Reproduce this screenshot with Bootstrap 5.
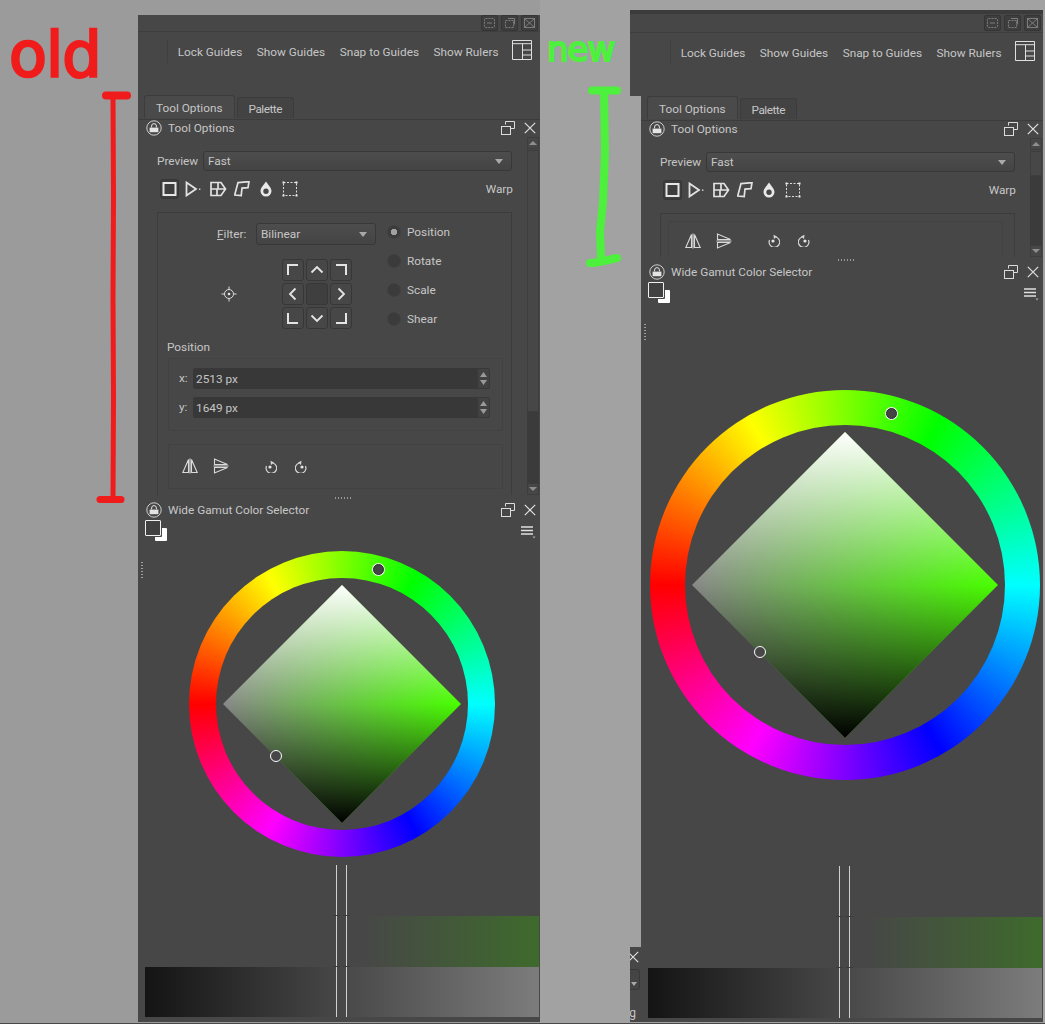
<!DOCTYPE html>
<html lang="en"><head><meta charset="utf-8"><title>Krita dockers old vs new</title>
<link href="https://cdn.jsdelivr.net/npm/bootstrap@5.3.0/dist/css/bootstrap.min.css" rel="stylesheet">
<style>
html,body{margin:0;background:#9b9b9b}
.desk{position:relative;width:1045px;height:1024px;overflow:hidden;background:linear-gradient(to right,#9b9b9b 540px,#a2a2a2 540px);font-family:Roboto,"Noto Sans",sans-serif;font-size:11.8px;line-height:1;color:#c6c6c6}
.floor{position:absolute;left:0;right:0;bottom:0;height:1px;background:#484848}
.scribble{position:absolute;font-family:"DejaVu Sans",sans-serif;line-height:1;letter-spacing:-1px}
.sc-old{left:9px;top:24px;font-size:62px;color:#f01c1c;-webkit-text-stroke:2.5px #f01c1c}
.sc-new{left:547px;top:32px;font-size:34px;color:#4df03c;-webkit-text-stroke:2px #4df03c}
.annot{position:absolute;left:0;top:0;pointer-events:none}
.pane{position:absolute;background:#474747;overflow:hidden}
.pane-old{left:138px;top:15px;width:402px;height:1007px}
.pane-new-top{left:630px;top:10px;width:413px;height:86px;border-top:4px solid #3b3b3b}
.pane-new{left:641px;top:96px;width:402px;height:926px}
.pane-frag{left:630px;top:947px;width:11px;height:75px}
.ttlbar{height:17px;border-bottom:1px solid #3e3e3e;gap:3px;padding-right:2px}
.pane-new-top .ttlbar{height:19px}
.winbtn{width:17px;height:16px;background:#3e3e3e;border:1px solid #353535;border-radius:2px}
.pane-new-top .winbtn{margin-top:1px}
.tbar{height:63px;padding:8px 8px 0 0;gap:14.500px}
.tsep{width:1px;height:23px;background:#3f3f3f;margin-right:-5px}
.tlbl{white-space:nowrap;line-height:24px}
.tlbl-last{margin-right:-1px}
.tabsrow{height:25px;padding-left:6px;border-bottom:1px solid #3c3c3c;gap:2px}
.tabx{height:21px;margin-top:2px;border:1px solid #3c3c3c;border-bottom:0;border-radius:3px 3px 0 0;padding:0 11px;line-height:22px;background:#434343;letter-spacing:-.5px}
.tabx.on{height:23px;margin-top:0;background:#4a4a4a;line-height:24px;padding:0 11px;letter-spacing:0}
.dockhead{height:16px;padding:0 4px 0 8px}
.dockhead span{margin-left:6px;padding-top:2px}
.dockbody{height:359px}
.pane-new .dockbody{height:120px}
.dockmain{flex:1;min-width:0;overflow:hidden;padding:15px 15px 0 19px}
.rowline{height:20px}
.cmb{height:20px;background:linear-gradient(#4d4d4d,#444);border:1px solid #383838;border-radius:3px;padding:2px 8px 0 4px}
.cmb::after{content:"";border:4.5px solid transparent;border-top:5px solid #a9a9a9;border-bottom:0;margin-top:-2px}
.lblprev{width:46px;flex:none;padding-top:2px}
.toolrow{margin-top:8px;height:20px;padding-left:3px;position:relative}
.toolbtn{width:19px;height:20px;background:#3d3d3d;border:1px solid #363636;border-radius:3px}
.warp{margin-left:auto;margin-right:-1px;padding-top:2px}
.grp{margin-top:13px;border:1px solid #3c3c3c;height:290px;padding:10px 9px 0 10px}
.pane-new .grp{height:60px;padding:7px 8px 0 7px;border-bottom:0}
.topblk{height:114px}
.leftcol{width:219px;flex:none}
.filt{height:22px;padding-left:49px}
.filt-lbl{padding-top:2px}
.fcmb{width:120px;margin-left:auto;height:22px;margin-right:11px}
.anch{margin-top:14px;padding-left:53px}
.gridbtns{display:grid;grid-template-columns:repeat(3,22px);grid-auto-rows:22px;gap:2px;margin-left:45px}
.gb{background:#474747;border:1px solid #373737;border-radius:3px}
.gb.mid{background:#3f3f3f}
.radios{gap:9px;margin-top:-1px}
.radrow{height:20px;gap:6px}
.radtx{padding-top:1px}
.rad{width:14px;height:14px;border-radius:50%;background:#3b3b3b;border:1px solid #414141;flex:none}
.rad.on{background:radial-gradient(circle,#a0a0a0 0 3px,#3b3b3b 3.500px)}
.poshd{margin-top:5px;margin-left:-1px;height:10px}
.innerbox{border:1px solid #424242;border-radius:2px;width:335px}
.ibox-a{margin-top:6px;height:73px;padding:9px 12px 0 10px}
.ibox-b{margin-top:13px;height:45px;padding:0 0 2px 13px;gap:15px}
.pane-new .ibox-b{margin-top:0;height:60px;padding-top:11px;padding-left:16px;align-items:flex-start!important}
.spinrow{height:21px;margin-bottom:8px}
.xlbl{width:14px;flex:none}
.spinin{flex:1;height:21px;background:#383838;border-radius:2px 0 0 2px;padding-left:3px;line-height:23px}
.spinbt{width:13px;height:21px;background:#424242;border:1px solid #383838;border-radius:0 2px 2px 0}
.scrl{width:12px;flex:none;margin-right:1px;padding-top:1px}
.scbtn{height:12px;background:#474747;border:1px solid #3d3d3d}
.scthumb{height:262px;margin-top:1px;background:#474747;border:1px solid #3d3d3d}
.pane-new .scthumb{height:25px}
.sctrack{flex:1;background:#3b3b3b}
.splitdots{height:7px;padding-left:197px}
.dots{width:17px;height:2px;margin-top:2px;background:repeating-linear-gradient(to right,#9a9a9a 0 1px,transparent 1px 3px)}
.colorsec{position:relative;height:504px}
.swat{position:absolute;left:7px;top:2px;width:22px;height:22px}
.sw-fg,.sw-bg{position:absolute;border-radius:1px}
.sw-bg{left:10px;top:8px;width:12px;height:13px;background:#fff}
.sw-fg{left:0;top:0;width:16px;height:16px;background:#414141;border:1px solid #f0f0f0;box-shadow:1px 1px 0 #474747}
.menuic{position:absolute;left:383px;top:8px}
.gutter{position:absolute;left:3px;top:44px;width:2px;height:16px;background:repeating-linear-gradient(#a0a0a0 0 1px,transparent 1px 3px)}
.wheelslot{padding:33px 0 0 6px;height:398px}
.wheel{position:relative;border-radius:50%;background:conic-gradient(from 270deg,#f00,#ff0,#0f0,#0ff,#00f,#f0f,#f00)}
.w-old{width:306px;height:306px}
.w-new{width:390px;height:390px}
.wheelhole{border-radius:50%;background:#474747}
.w-old .wheelhole{width:252px;height:252px}
.w-new .wheelhole{width:320px;height:320px}
.diam{clip-path:polygon(50% 0,100% 50%,50% 100%,0 50%);background:linear-gradient(#fff,rgba(255,255,255,0) 50%,rgba(0,0,0,0) 50%,#000),linear-gradient(to right,#888,#48ff00)}
.w-old .diam{width:238px;height:238px}
.w-new .diam{width:306px;height:306px}
.hnd{position:absolute;width:12px;height:12px;border-radius:50%;background:#474747;border:1px solid #fff}
.hnd.dark{width:11px;height:11px;border-color:#2a2a2a;background:#444;box-shadow:0 0 0 1px #eee}
.h1a{left:184px;top:12.500px}.h2a{left:81px;top:198.500px}
.h1b{left:236px;top:17.500px}.h2b{left:104px;top:255.500px}
.stripwrap{position:relative;padding:0 1px 0 7px}
.stripgreen{height:51px;margin-left:200px;background:linear-gradient(to right,#474747,#474747 8%,#3e6a2c)}
.stripgray{height:50px;background:linear-gradient(to right,#141414,#7c7c7c)}
.vln{position:absolute;width:1px;background:#d0d0d0;top:-51px;height:152px}
.vln::before,.vln::after{content:"";position:absolute;left:-3px;width:7px;height:1px;background:#3a3a3a}
.vln::before{top:50px}.vln::after{top:101px}
.vln-a{left:198px}.vln-b{left:208px}
.pane-new .wheelslot{height:637px;padding-top:110px}
.pane-new .colorsec{position:relative;height:742px}
.pane-new .stripgreen{margin-left:202px}
.fragx{position:absolute;left:-3px;top:4px}
.fragc{position:absolute;left:-20px;top:22px;width:30px;height:21px;background:#444;border:1px solid #383838;border-radius:3px}
.fragc::after{content:"";position:absolute;right:2px;bottom:3px;border:3px solid transparent;border-top:4px solid #a9a9a9;border-bottom:0}
.fragg{position:absolute;right:5px;top:60px;font-size:12px}
.ml-t2{margin-left:6px}.ml-t3{margin-left:8px}.ml-t4{margin-left:7px}.ml-t5{margin-left:9px}.ml-t6{margin-left:9px}
.ml-ra{margin-left:19px}.ml-rb{margin-left:3px}
svg{display:block;flex:none}
</style></head><body>
<svg width="0" height="0" class="position-absolute">
 <symbol id="lock" viewBox="0 0 16 16"><circle cx="8" cy="8" r="7.200" fill="none" stroke="#cfcfcf" stroke-width="1"/><path d="M5.600 7.400V6a2.400 2.400 0 0 1 4.800 0v1.400" fill="none" stroke="#e4e4e4" stroke-width="1"/><rect x="3.600" y="7.600" width="8.800" height="4.600" fill="#e4e4e4"/></symbol>
 <symbol id="flt" viewBox="0 0 16 16"><path d="M5.500 4.500V1.500h9v7h-4" fill="none" stroke="#dcdcdc"/><rect x="1.500" y="6.500" width="9" height="8" fill="none" stroke="#dcdcdc"/></symbol>
 <symbol id="cls" viewBox="0 0 12 12"><path d="M.8.8l10.400 10.400M11.200.8L.8 11.200" stroke="#e0e0e0" stroke-width="1.200" fill="none"/></symbol>
 <symbol id="wa" viewBox="0 0 15 14"><rect x="2.500" y="2.500" width="10" height="9" rx="1" fill="none" stroke="#7c7c7c" stroke-dasharray="2 1"/><path d="M5 7h5" stroke="#7c7c7c"/></symbol>
 <symbol id="wb" viewBox="0 0 15 14"><rect x="3.500" y="4.500" width="8" height="7" fill="none" stroke="#7c7c7c" stroke-dasharray="2 1"/><path d="M6 2.500h6.500v6" fill="none" stroke="#7c7c7c"/></symbol>
 <symbol id="wc" viewBox="0 0 15 14"><rect x="2.500" y="2.500" width="10" height="9" fill="none" stroke="#7c7c7c"/><path d="M3 3l9 8M12 3l-9 8" stroke="#7c7c7c"/></symbol>
 <symbol id="lay" viewBox="0 0 20 20"><path d="M.5.5h19v19H.5zM.5 3.700h19M10.500 3.700v15.800M10.500 10h9M10.500 15h9" fill="none" stroke="#e0e0e0"/></symbol>
 <symbol id="t1" viewBox="0 0 17 18"><rect x="2.500" y="3" width="12" height="12" fill="none" stroke="#e6e6e6" stroke-width="2"/></symbol>
 <symbol id="t2" viewBox="0 0 16 16"><path d="M1.500 1.500L11 8l-9.500 6.500z" fill="none" stroke="#e2e2e2" stroke-width="1.800"/><rect x="14" y="7.500" width="1.400" height="1.400" fill="#ddd"/></symbol>
 <symbol id="t3" viewBox="0 0 18 16"><path d="M2 1.500h10l4.500 6.500-4.500 6.500H2zM2 8h14.500M9 1.500V8M8 8v6.500" fill="none" stroke="#e2e2e2" stroke-width="1.700"/></symbol>
 <symbol id="t4" viewBox="0 0 16 16"><path d="M4 1.600L15 .6l-1 6-6 .5-.8 7.400-6.500-.5z" fill="none" stroke="#e2e2e2" stroke-width="1.700"/></symbol>
 <symbol id="t5" viewBox="0 0 14 16"><path fill-rule="evenodd" fill="#e8e8e8" d="M7 .5c1 2 5.500 6 5.500 9.500a5.500 5.500 0 0 1-11 0C1.500 6.500 6 2.500 7 .5zM7 7.500a2.700 2.700 0 1 0 0 5.400 2.700 2.700 0 0 0 0-5.400z"/></symbol>
 <symbol id="t6" viewBox="0 0 16 16"><rect x="1.500" y="1.500" width="13" height="13" fill="none" stroke="#dcdcdc" stroke-dasharray="2 1.500"/><g fill="#eee"><rect x="0.500" y="0.500" width="2" height="2"/><rect x="13.500" y="0.500" width="2" height="2"/><rect x="0.500" y="13.500" width="2" height="2"/><rect x="13.500" y="13.500" width="2" height="2"/></g></symbol>
 <symbol id="an" viewBox="0 0 16 16"><circle cx="8" cy="8" r="4.500" fill="none" stroke="#dcdcdc"/><circle cx="8" cy="8" r="1.300" fill="#e6e6e6"/><path d="M8 .5v3M8 12.500v3M.5 8h3M12.500 8h3" stroke="#dcdcdc"/></symbol>
 <symbol id="fa" viewBox="0 0 16 16"><path d="M6.500 1.500v13H.8zM9.500 1.500v13h5.700zM8 .5v15" fill="none" stroke="#dadada" stroke-width="1.100"/></symbol>
 <symbol id="fb" viewBox="0 0 16 16"><path d="M1.500 6.500V1l13 5.500zM1.500 9.500V15l13-5.500zM.5 8h15" fill="none" stroke="#dadada" stroke-width="1.100"/></symbol>
 <symbol id="ra" viewBox="0 0 14 14"><path d="M9 3a5.300 5.300 0 1 1-6.500 3" transform="translate(1 1)" fill="none" stroke="#d8d8d8" stroke-width="1.200"/><path d="M7.500 1.800l3.500 1.800-3 2.400z" fill="#d8d8d8"/><circle cx="7" cy="8" r="1.600" fill="#e4e4e4"/></symbol>
 <symbol id="rb" viewBox="0 0 14 14"><path d="M5 3a5.300 5.300 0 1 0 6.500 3" transform="translate(-1 1)" fill="none" stroke="#d8d8d8" stroke-width="1.200"/><path d="M6.500 1.800L3 3.600l3 2.400z" fill="#d8d8d8"/><circle cx="7" cy="8" r="1.600" fill="#e4e4e4"/></symbol>
 <symbol id="mn" viewBox="0 0 15 13"><path d="M0 1h12M0 4.500h12M0 8h12" stroke="#e0e0e0" stroke-width="1.500"/><path d="M11.500 10.500h3l-1.500 2z" fill="#aaa"/></symbol>
 <symbol id="spn" viewBox="0 0 11 19"><path d="M5.500 3l3.500 5H2zM5.500 16L2 11h7z" fill="#9a9a9a"/></symbol>
 <symbol id="up" viewBox="0 0 10 10"><path d="M5 3l4 4H1z" fill="#8f8f8f"/></symbol>
 <symbol id="dn" viewBox="0 0 10 10"><path d="M5 7L1 3h8z" fill="#8f8f8f"/></symbol>
 <symbol id="a1" viewBox="0 0 14 14"><path d="M2 12V2h10" fill="none" stroke="#e4e4e4" stroke-width="2"/></symbol>
 <symbol id="a2" viewBox="0 0 14 14"><path d="M1.500 9.500L7 4l5.500 5.500" fill="none" stroke="#e4e4e4" stroke-width="1.800"/></symbol>
 <symbol id="a3" viewBox="0 0 14 14"><path d="M2 2h10v10" fill="none" stroke="#e4e4e4" stroke-width="2"/></symbol>
 <symbol id="a4" viewBox="0 0 14 14"><path d="M9.500 1.500L4 7l5.500 5.500" fill="none" stroke="#e4e4e4" stroke-width="1.800"/></symbol>
 <symbol id="a6" viewBox="0 0 14 14"><path d="M4.500 1.500L10 7l-5.500 5.500" fill="none" stroke="#e4e4e4" stroke-width="1.800"/></symbol>
 <symbol id="a7" viewBox="0 0 14 14"><path d="M2 2v10h10" fill="none" stroke="#e4e4e4" stroke-width="2"/></symbol>
 <symbol id="a8" viewBox="0 0 14 14"><path d="M1.500 4.500L7 10l5.500-5.500" fill="none" stroke="#e4e4e4" stroke-width="1.800"/></symbol>
 <symbol id="a9" viewBox="0 0 14 14"><path d="M12 2v10H2" fill="none" stroke="#e4e4e4" stroke-width="2"/></symbol>
</svg>
<div class="desk">
 <div class="pane pane-old d-flex flex-column">
  <div class="ttlbar d-flex justify-content-end">
   <div class="winbtn"><svg width="15" height="14"><use href="#wa"/></svg></div><div class="winbtn"><svg width="15" height="14"><use href="#wb"/></svg></div><div class="winbtn"><svg width="15" height="14"><use href="#wc"/></svg></div>
  </div>
  <div class="tbar d-flex justify-content-end">
   <div class="tsep"></div><div class="tlbl">Lock Guides</div><div class="tlbl">Show Guides</div><div class="tlbl">Snap to Guides</div><div class="tlbl tlbl-last">Show Rulers</div>
   <svg width="20" height="20"><use href="#lay"/></svg>
  </div>
  <div class="tabsrow d-flex"><div class="tabx on">Tool Options</div><div class="tabx">Palette</div></div>
  <div class="dockhead d-flex align-items-center"><svg width="16" height="16"><use href="#lock"/></svg><span class="flex-grow-1">Tool Options</span><svg width="16" height="16" class="me-2"><use href="#flt"/></svg><svg width="12" height="12"><use href="#cls"/></svg></div>
  <div class="dockbody d-flex">
   <div class="dockmain">
    <div class="rowline d-flex align-items-center"><div class="lblprev">Preview</div><div class="cmb flex-grow-1 d-flex align-items-center justify-content-between">Fast</div></div>
    <div class="toolrow d-flex align-items-center">
     <div class="toolbtn d-flex align-items-center justify-content-center"><svg width="17" height="18"><use href="#t1"/></svg></div>
     <svg width="16" height="16" class="ml-t2"><use href="#t2"/></svg><svg width="18" height="16" class="ml-t3"><use href="#t3"/></svg><svg width="16" height="16" class="ml-t4"><use href="#t4"/></svg><svg width="14" height="16" class="ml-t5"><use href="#t5"/></svg><svg width="16" height="16" class="ml-t6"><use href="#t6"/></svg>
     <div class="warp">Warp</div>
    </div>
    <div class="grp">
     <div class="topblk d-flex">
      <div class="leftcol">
       <div class="filt d-flex align-items-center"><div class="filt-lbl"><u>F</u>ilter:</div><div class="cmb fcmb d-flex align-items-center justify-content-between">Bilinear</div></div>
       <div class="anch d-flex align-items-center">
        <svg width="16" height="16"><use href="#an"/></svg>
        <div class="gridbtns">
         <div class="gb d-flex align-items-center justify-content-center"><svg width="14" height="14"><use href="#a1"/></svg></div><div class="gb d-flex align-items-center justify-content-center"><svg width="14" height="14"><use href="#a2"/></svg></div><div class="gb d-flex align-items-center justify-content-center"><svg width="14" height="14"><use href="#a3"/></svg></div>
         <div class="gb d-flex align-items-center justify-content-center"><svg width="14" height="14"><use href="#a4"/></svg></div><div class="gb mid"></div><div class="gb d-flex align-items-center justify-content-center"><svg width="14" height="14"><use href="#a6"/></svg></div>
         <div class="gb d-flex align-items-center justify-content-center"><svg width="14" height="14"><use href="#a7"/></svg></div><div class="gb d-flex align-items-center justify-content-center"><svg width="14" height="14"><use href="#a8"/></svg></div><div class="gb d-flex align-items-center justify-content-center"><svg width="14" height="14"><use href="#a9"/></svg></div>
        </div>
       </div>
      </div>
      <div class="radios d-flex flex-column">
       <div class="radrow d-flex align-items-center"><span class="rad on"></span><span class="radtx">Position</span></div>
       <div class="radrow d-flex align-items-center"><span class="rad"></span><span class="radtx">Rotate</span></div>
       <div class="radrow d-flex align-items-center"><span class="rad"></span><span class="radtx">Scale</span></div>
       <div class="radrow d-flex align-items-center"><span class="rad"></span><span class="radtx">Shear</span></div>
      </div>
     </div>
     <div class="poshd">Position</div>
     <div class="innerbox ibox-a">
      <div class="spinrow d-flex align-items-center"><div class="xlbl">x:</div><div class="spinin">2513 px</div><div class="spinbt"><svg width="11" height="19"><use href="#spn"/></svg></div></div>
      <div class="spinrow d-flex align-items-center"><div class="xlbl">y:</div><div class="spinin">1649 px</div><div class="spinbt"><svg width="11" height="19"><use href="#spn"/></svg></div></div>
     </div>
     <div class="innerbox ibox-b d-flex align-items-center">
      <svg width="16" height="16"><use href="#fa"/></svg><svg width="16" height="16"><use href="#fb"/></svg><svg width="14" height="14" class="ml-ra"><use href="#ra"/></svg><svg width="14" height="14" class="ml-rb"><use href="#rb"/></svg>
     </div>
    </div>
   </div>
   <div class="scrl d-flex flex-column"><div class="scbtn"><svg width="10" height="10"><use href="#up"/></svg></div><div class="scthumb"></div><div class="sctrack"></div><div class="scbtn"><svg width="10" height="10"><use href="#dn"/></svg></div></div>
  </div>
  <div class="splitdots"><div class="dots"></div></div>
  <div class="dockhead d-flex align-items-center"><svg width="16" height="16"><use href="#lock"/></svg><span class="flex-grow-1">Wide Gamut Color Selector</span><svg width="16" height="16" class="me-2"><use href="#flt"/></svg><svg width="12" height="12"><use href="#cls"/></svg></div>
  <div class="colorsec">
   <div class="swat"><div class="sw-bg"></div><div class="sw-fg"></div></div>
   <svg class="menuic" width="15" height="13"><use href="#mn"/></svg>
   <div class="gutter"></div>
   <div class="wheelslot d-flex justify-content-center"><div class="wheel w-old d-flex align-items-center justify-content-center"><div class="wheelhole d-flex align-items-center justify-content-center"><div class="diam"></div></div><div class="hnd dark h1a"></div><div class="hnd h2a"></div></div></div>
   <div class="stripwrap">
    <div class="stripgreen"></div><div class="stripgray"></div>
    <div class="vln vln-a"></div><div class="vln vln-b"></div>
   </div>
  </div>
 </div>

 <div class="pane pane-new-top d-flex flex-column">
  <div class="ttlbar d-flex justify-content-end">
   <div class="winbtn"><svg width="15" height="14"><use href="#wa"/></svg></div><div class="winbtn"><svg width="15" height="14"><use href="#wb"/></svg></div><div class="winbtn"><svg width="15" height="14"><use href="#wc"/></svg></div>
  </div>
  <div class="tbar d-flex justify-content-end">
   <div class="tsep"></div><div class="tlbl">Lock Guides</div><div class="tlbl">Show Guides</div><div class="tlbl">Snap to Guides</div><div class="tlbl tlbl-last">Show Rulers</div>
   <svg width="20" height="20"><use href="#lay"/></svg>
  </div>
 </div>
 <div class="pane pane-new d-flex flex-column">
  <div class="tabsrow d-flex"><div class="tabx on">Tool Options</div><div class="tabx">Palette</div></div>
  <div class="dockhead d-flex align-items-center"><svg width="16" height="16"><use href="#lock"/></svg><span class="flex-grow-1">Tool Options</span><svg width="16" height="16" class="me-2"><use href="#flt"/></svg><svg width="12" height="12"><use href="#cls"/></svg></div>
  <div class="dockbody d-flex">
   <div class="dockmain">
    <div class="rowline d-flex align-items-center"><div class="lblprev">Preview</div><div class="cmb flex-grow-1 d-flex align-items-center justify-content-between">Fast</div></div>
    <div class="toolrow d-flex align-items-center">
     <div class="toolbtn d-flex align-items-center justify-content-center"><svg width="17" height="18"><use href="#t1"/></svg></div>
     <svg width="16" height="16" class="ml-t2"><use href="#t2"/></svg><svg width="18" height="16" class="ml-t3"><use href="#t3"/></svg><svg width="16" height="16" class="ml-t4"><use href="#t4"/></svg><svg width="14" height="16" class="ml-t5"><use href="#t5"/></svg><svg width="16" height="16" class="ml-t6"><use href="#t6"/></svg>
     <div class="warp">Warp</div>
    </div>
    <div class="grp">
     <div class="innerbox ibox-b d-flex">
      <svg width="16" height="16"><use href="#fa"/></svg><svg width="16" height="16"><use href="#fb"/></svg><svg width="14" height="14" class="ml-ra"><use href="#ra"/></svg><svg width="14" height="14" class="ml-rb"><use href="#rb"/></svg>
     </div>
    </div>
   </div>
   <div class="scrl d-flex flex-column"><div class="scbtn"><svg width="10" height="10"><use href="#up"/></svg></div><div class="scthumb"></div><div class="sctrack"></div><div class="scbtn"><svg width="10" height="10"><use href="#dn"/></svg></div></div>
  </div>
  <div class="splitdots"><div class="dots"></div></div>
  <div class="dockhead d-flex align-items-center"><svg width="16" height="16"><use href="#lock"/></svg><span class="flex-grow-1">Wide Gamut Color Selector</span><svg width="16" height="16" class="me-2"><use href="#flt"/></svg><svg width="12" height="12"><use href="#cls"/></svg></div>
  <div class="colorsec">
   <div class="swat"><div class="sw-bg"></div><div class="sw-fg"></div></div>
   <svg class="menuic" width="15" height="13"><use href="#mn"/></svg>
   <div class="gutter"></div>
   <div class="wheelslot d-flex justify-content-center"><div class="wheel w-new d-flex align-items-center justify-content-center"><div class="wheelhole d-flex align-items-center justify-content-center"><div class="diam"></div></div><div class="hnd dark h1b"></div><div class="hnd h2b"></div></div></div>
   <div class="stripwrap">
    <div class="stripgreen"></div><div class="stripgray"></div>
    <div class="vln vln-a"></div><div class="vln vln-b"></div>
   </div>
  </div>
 </div>
 <div class="pane pane-frag">
  <svg class="fragx" width="12" height="12"><use href="#cls"/></svg>
  <div class="fragc"></div>
  <div class="fragg">g</div>
 </div>
 <div class="floor"></div>
 <span class="scribble sc-old">old</span>
 <span class="scribble sc-new">new</span>
 <svg class="annot" width="1045" height="1024" fill="none" stroke-linecap="round">
  <path d="M106 95.500h21" stroke="#f01c1c" stroke-width="8"/><path d="M113 97l.5 100-.5 100 .5 100-.5 102" stroke="#f01c1c" stroke-width="5"/><path d="M100 499.500h21" stroke="#f01c1c" stroke-width="7"/>
  <path d="M592 90.500h25" stroke="#4df03c" stroke-width="8"/><path d="M604 92l1 60-2 50-3 30 1 26" stroke="#4df03c" stroke-width="8"/><path d="M590 263c8 0 18-3 27-5" stroke="#4df03c" stroke-width="8"/>
 </svg>
</div>
<script src="https://cdn.jsdelivr.net/npm/bootstrap@5.3.0/dist/js/bootstrap.bundle.min.js"></script>
</body></html>
